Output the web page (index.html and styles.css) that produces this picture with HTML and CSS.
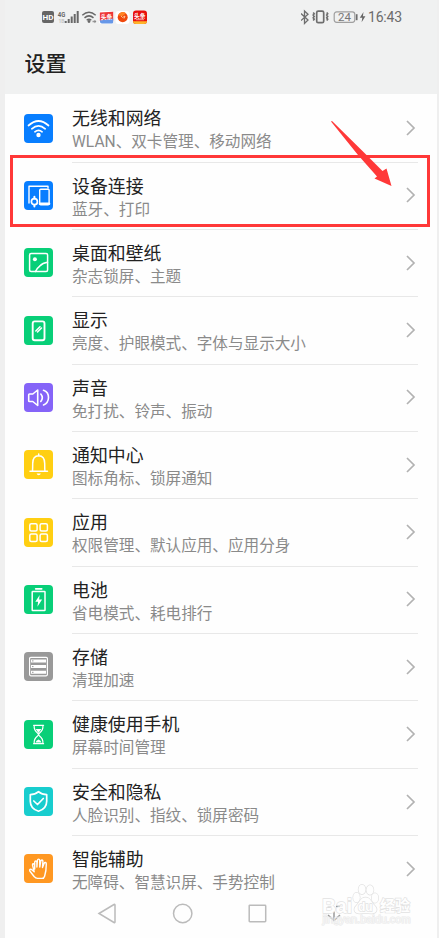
FILE: index.html
```html
<!DOCTYPE html>
<html lang="zh-CN">
<head>
<meta charset="utf-8">
<title>设置</title>
<link rel="stylesheet" href="styles.css">
</head>
<body>
<div class="phone">
  <header class="header">
    <div class="status">
      <svg class="status-left" width="108" height="18" viewBox="0 0 108 18">
        <rect x="1" y="3" width="12" height="12" rx="2" fill="#666"/>
        <text class="hd" x="1.500" y="12" textLength="11" lengthAdjust="spacingAndGlyphs">HD</text>
        <text class="net" x="16.800" y="8.700" textLength="7.500" lengthAdjust="spacingAndGlyphs">4G</text>
        <text class="net faint" x="17.500" y="15">1B</text>
        <path d="M24.700 15v-2M27.700 15v-4M30.700 15v-6.500M33.700 15V6M36.700 15V3" stroke="#686868" stroke-width="2"/>
        <path d="M41.300 7.200q6.700-6 13.400 0M43.500 9.900q4.500-4 9 0M45.700 12.300q2.300-2 4.600 0" fill="none" stroke="#686868" stroke-width="1.500"/>
        <circle cx="48" cy="13.500" r="1.400" fill="#686868"/><path d="M51.500 13.500h3" stroke="#999" stroke-width="1.500"/><path d="M53.500 11.800l1.900 1.700-1.900 1.700z" fill="#888"/>
        <rect x="58" y="3" width="14.500" height="13" rx="2.500" fill="#fff"/>
        <path d="M58.800 4.500l13.400-.7v9H58.800z" fill="#ee3737"/><path d="M58.800 12.500l13.400-2V14q0 1.500-1.500 1.500H61q-2.200 0-2.200-3z" fill="#6697e8"/>
        <text class="news" x="59.800" y="10.700">头条</text>
        <rect x="74.500" y="3" width="14" height="13" rx="3" fill="#fff"/><circle cx="81.700" cy="9.300" r="5" fill="#f0480c"/><path d="M77 7.500a5 5 0 0 1 8-2.200L81.500 8z" fill="#ff8424"/><path d="M80 8l1.500 1.500L84 8l-1 2.500" fill="none" stroke="#ffd0a0" stroke-width=".9"/>
        <rect x="92" y="2.500" width="14" height="13.500" rx="3" fill="#e80f0c"/><path d="M92 13.300h14q0 2.700-3 2.700h-8q-3 0-3-2.700z" fill="#ffb52a"/>
        <text class="news" x="93" y="9.800">头条</text><path d="M95 11.700h8" stroke="#fff" stroke-width=".6"/>
      </svg>
      <div class="status-right">
        <svg width="66" height="18" viewBox="0 0 66 18" fill="none" stroke="#6e6e6e">
          <path d="M0 5.500l7 6.500-3.500 3.500V3L7 6.200l-7 6.300" stroke-width="1.300"/>
          <rect x="15.700" y="3.200" width="7" height="11.500" rx="1.500" stroke-width="1.700"/>
          <path d="M12.200 4.500l1 1.300-1 1.300 1 1.300-1 1.400 1 1.400-1 1.300M25.700 4.500l1 1.300-1 1.300 1 1.300-1 1.400 1 1.400-1 1.300" stroke-width="1.600"/>
          <rect x="33.200" y="3.900" width="20.600" height="10.400" rx="2.500" stroke="#a0a0a0" stroke-width="1.200"/>
          <path d="M55.700 6.200v6" stroke-width="1.700"/>
          <path d="M62.500 4L58.800 9.800h2.500l-.7 4.500 3.800-6h-2.500z" fill="#666" stroke="none"/>
          <text class="charge" x="37" y="13">24</text>
        </svg>
        <span class="clock">16:43</span>
      </div>
    </div>
    <h1>设置</h1>
  </header>

  <main class="list">
    <section class="row">
      <svg class="icon blue" viewBox="0 0 29 29"><path d="M4.500 11.500q10-9 20 0M7.800 14.800q6.700-6 13.400 0M10.900 17.800q3.600-3 7.200 0" stroke-width="1.700"/><circle cx="14.500" cy="21" r="2.200" fill="#fff" stroke="none"/></svg>
      <div class="body"><div><h2>无线和网络</h2><p>WLAN、双卡管理、移动网络</p></div><svg class="chev" viewBox="0 0 10 16"><path d="M1 1l7 7-7 7"/></svg></div>
    </section>
    <section class="row">
      <svg class="icon blue" viewBox="0 0 29 29"><path d="M5 22V5.300h19V7" stroke-width="1.400"/><rect x="15.700" y="8.300" width="9.400" height="15.500" rx="1" stroke-width="1.400"/><path d="M16 22.700h9" stroke-width="2.600"/><circle cx="10.400" cy="20.700" r="3" stroke-width="1.700"/><path d="M10.400 15.800v1.600M10.400 24v1.500" stroke-width="2"/></svg>
      <div class="body"><div><h2>设备连接</h2><p>蓝牙、打印</p></div><svg class="chev" viewBox="0 0 10 16"><path d="M1 1l7 7-7 7"/></svg></div>
    </section>
    <section class="row">
      <svg class="icon green" viewBox="0 0 29 29"><rect x="5.600" y="5.600" width="18" height="18" rx="1.500"/><circle cx="10.900" cy="11.300" r="2" fill="#fff" stroke="none"/><path d="M11.500 23.500q1-3 4-5.200 3.300-3.600 8-4"/></svg>
      <div class="body"><div><h2>桌面和壁纸</h2><p>杂志锁屏、主题</p></div><svg class="chev" viewBox="0 0 10 16"><path d="M1 1l7 7-7 7"/></svg></div>
    </section>
    <section class="row">
      <svg class="icon green" viewBox="0 0 29 29"><rect x="8.700" y="5.400" width="11.800" height="18.800" rx="2" stroke-width="1.900"/><path d="M11.800 15l4.200-4.200M13.500 16l4-4" stroke-width="1.500"/></svg>
      <div class="body"><div><h2>显示</h2><p>亮度、护眼模式、字体与显示大小</p></div><svg class="chev" viewBox="0 0 10 16"><path d="M1 1l7 7-7 7"/></svg></div>
    </section>
    <section class="row">
      <svg class="icon purple" viewBox="0 0 29 29"><path d="M4.700 11.800q0-.8.800-.8h3.300l4.900-4v15.500l-4.900-4H5.500q-.8 0-.8-.8zM16.800 11q3 3.700 0 7.500M19.500 7.200Q24.700 9 24.500 14.700 24.300 20 19.500 22" stroke-width="1.600"/></svg>
      <div class="body"><div><h2>声音</h2><p>免打扰、铃声、振动</p></div><svg class="chev" viewBox="0 0 10 16"><path d="M1 1l7 7-7 7"/></svg></div>
    </section>
    <section class="row">
      <svg class="icon yellow" viewBox="0 0 29 29"><path d="M6 21.300h17.500M8.500 21q.2-2 .2-7.500 0-7.500 6-7.700 6 .2 6 7.700 0 5.500.2 7.500M14.700 5.500V4"/><path d="M12.600 23.500h4.200q-.5 1.700-2.100 1.700t-2.100-1.700z" fill="#fff" stroke="none"/></svg>
      <div class="body"><div><h2>通知中心</h2><p>图标角标、锁屏通知</p></div><svg class="chev" viewBox="0 0 10 16"><path d="M1 1l7 7-7 7"/></svg></div>
    </section>
    <section class="row">
      <svg class="icon yellow" viewBox="0 0 29 29"><rect x="5.800" y="5.800" width="7.300" height="7.300" rx="1.500"/><rect x="16.100" y="5.800" width="7.300" height="7.300" rx="1.500"/><rect x="5.800" y="16.100" width="7.300" height="7.300" rx="1.500"/><rect x="16.100" y="16.100" width="7.300" height="7.300" rx="1.500"/></svg>
      <div class="body"><div><h2>应用</h2><p>权限管理、默认应用、应用分身</p></div><svg class="chev" viewBox="0 0 10 16"><path d="M1 1l7 7-7 7"/></svg></div>
    </section>
    <section class="row">
      <svg class="icon green" viewBox="0 0 29 29"><rect x="8.200" y="6.600" width="12.800" height="19" rx=".5" stroke-width="1.500"/><path d="M11.700 3.800h6" stroke-width="1.700"/><path d="M15.700 10l-4.400 6.800h2.800l-.7 5 4.700-7.300h-3z" fill="#fff" stroke="none"/></svg>
      <div class="body"><div><h2>电池</h2><p>省电模式、耗电排行</p></div><svg class="chev" viewBox="0 0 10 16"><path d="M1 1l7 7-7 7"/></svg></div>
    </section>
    <section class="row">
      <svg class="icon gray" viewBox="0 0 29 29"><rect x="5.600" y="5.300" width="17.800" height="18.500" rx="1.200" stroke-width="1.200"/><path d="M7 8.900h15M7 14.600h15M7 20.300h15" stroke-width="3"/><path d="M8 8.900h1.500M8 14.600h1.500M8 20.300h1.500" stroke="#999" stroke-width="1"/></svg>
      <div class="body"><div><h2>存储</h2><p>清理加速</p></div><svg class="chev" viewBox="0 0 10 16"><path d="M1 1l7 7-7 7"/></svg></div>
    </section>
    <section class="row">
      <svg class="icon green" viewBox="0 0 29 29"><path d="M9.600 5.300h10M9.600 23.700h10M10.200 5.500q-.5 4.500 3.300 7.500 1 1 1 1.500t-1 1.500q-3.800 3-3.300 7.500M18.900 5.500q.5 4.500-3.300 7.500-1 1-1 1.500t1 1.500q3.800 3 3.300 7.500" stroke-width="1.200"/><path d="M11.700 9h5.600l-2.800 4zM11.500 22.500q.5-2 3-3 2.500 1 3 3z" fill="#fff" stroke="none"/></svg>
      <div class="body"><div><h2>健康使用手机</h2><p>屏幕时间管理</p></div><svg class="chev" viewBox="0 0 10 16"><path d="M1 1l7 7-7 7"/></svg></div>
    </section>
    <section class="row">
      <svg class="icon cyan" viewBox="0 0 29 29"><path d="M14.500 4.700q3.500 3 8.200 3v6.500q0 7.500-8.200 10-8.200-2.500-8.200-10V7.700q4.700 0 8.200-3zM9.800 14l3.700 3.500 5.800-6" stroke-width="1.700"/></svg>
      <div class="body"><div><h2>安全和隐私</h2><p>人脸识别、指纹、锁屏密码</p></div><svg class="chev" viewBox="0 0 10 16"><path d="M1 1l7 7-7 7"/></svg></div>
    </section>
    <section class="row last">
      <svg class="icon orange" viewBox="0 0 29 29"><path d="M10.700 15V8.200q0-1.200 1-1.200t1.200 1.200V13M12.900 13l.5-6.700q.2-1.200 1.200-1.200t1.100 1.200L15.800 13M15.800 13l1-6q.3-1.200 1.300-1 .9.200.8 1.300L18.500 13.500M18.500 13.500l1.700-4.300q.4-1 1.300-.7t.8 1.400q0 7-1.700 12.300-.6 2.200-2.600 2.200h-4.500q-2 0-3.200-1.700l-4.500-5.700q-.6-1 .3-1.600.8-.5 1.800.3l2.300 2.100-1.700-6.800q-.1-1.200.7-1.300.9-.1 1.300 1.200" stroke-width="1.400"/></svg>
      <div class="body"><div><h2>智能辅助</h2><p>无障碍、智慧识屏、手势控制</p></div><svg class="chev" viewBox="0 0 10 16"><path d="M1 1l7 7-7 7"/></svg></div>
    </section>
  </main>

  <nav class="navbar">
    <svg viewBox="0 0 22 22"><path d="M3 11.500L18 2.500q1-.5 1 .5v17q0 1-1 .5z"/></svg>
    <svg viewBox="0 0 22 22"><circle cx="10.700" cy="11.500" r="9.200"/></svg>
    <svg viewBox="0 0 22 22"><rect x="2.200" y="3.200" width="16.500" height="16.500" rx=".7"/></svg>
    <svg viewBox="0 0 22 22"><path class="dark" d="M4.500 4.500h4M13 4.500h4M11 9.500v8.500M5 13l6 5.500L17 13"/></svg>
  </nav>
</div>

<div class="highlight"></div>
<svg class="arrow" viewBox="0 0 62 67"><path d="M1 1.500L2 1l32 31.500 18.500 18.500 4-2.500 5 17.500-17-7.500 2.500-2L28 35z"/></svg>
<svg class="watermark" viewBox="0 0 94 46">
  <text class="wm-big" x="2" y="31" textLength="30" lengthAdjust="spacingAndGlyphs">Bai</text>
  <g class="paw"><ellipse cx="36.500" cy="15.500" rx="3.300" ry="4.700"/><ellipse cx="42" cy="7.500" rx="3.500" ry="4.700"/><ellipse cx="50" cy="8" rx="3.500" ry="4.700"/><ellipse cx="55" cy="16" rx="3.300" ry="4.700"/><path d="M45.500 15.500c5 0 6 5 9 8 4 4 2 8-3 8q-6-1-12 0c-5 0-7-4-3-8 3-3 4-8 9-8z"/></g>
  <text class="wm-du" x="38" y="29">du</text>
  <text class="wm-cn" x="60" y="29">经验</text>
  <text class="wm-url" x="2.500" y="41" textLength="88" lengthAdjust="spacingAndGlyphs">jingyan.baidu.com</text>
</svg>
</body>
</html>
```

FILE: styles.css
```css
* { box-sizing: border-box; }
body {
  position: relative;
  margin: 0;
  height: 938px;
  overflow: hidden;
  background: #efefef;
  font-family: Roboto, "Noto Sans CJK SC", sans-serif;
}
.phone {
  width: 432px;
  height: 938px;
  margin-left: 5px;
  background: #fefefe;
  display: flex;
  flex-direction: column;
}
.header {
  height: 94px;
  flex: none;
  background: #f0f1f1;
}
.status {
  display: flex;
  justify-content: space-between;
  height: 34px;
  padding: 8px 34px 0 36px;
}
.status-right { display: flex; }
.clock {
  width: 35px;
  margin-left: 1px;
  font-size: 14px;
  line-height: 19px;
  letter-spacing: -0.2px;
  color: #6c6c6c;
  white-space: nowrap;
}
svg text { stroke: none; }
.hd { font: bold 8px Roboto, sans-serif; fill: #fff; }
.net { font: bold 8px Roboto, sans-serif; fill: #666; }
.faint { font-size: 5px; fill: #c4c4c4; }
.news { font: bold 5.800px "Noto Sans CJK SC", sans-serif; fill: #fff; }
.charge { font: 11.500px Roboto, sans-serif; fill: #777; }
h1 {
  margin: 14px 0 0 19.500px;
  font-size: 21px;
  line-height: 33px;
  font-weight: 500;
  color: #222;
}
.list { flex: none; padding-top: 1.200px; }
.row {
  display: flex;
  height: 67.350px;
  padding: 0 19px;
}
.icon {
  width: 29px;
  height: 29px;
  margin: 18.500px 19px 0 0;
  flex: none;
  border-radius: 4px;
  fill: none;
  stroke: #fff;
  stroke-width: 1.500;
  stroke-linecap: round;
  stroke-linejoin: round;
}
.blue { background: #087eff; }
.green { background: #08cf78; }
.purple { background: #8564f8; }
.yellow { background: #ffcf12; }
.gray { background: #999; stroke-linecap: butt; }
.cyan { background: #18cdce; }
.orange { background: #ff9822; }
.body {
  flex: 1;
  display: flex;
  justify-content: space-between;
  padding-top: 11px;
  border-bottom: 1px solid #e8e8e8;
}
.last .body { border-bottom: 0; }
h2, p { margin: 0; font-weight: 400; white-space: nowrap; }
h2 { font-size: 17.900px; line-height: 25px; color: #222; }
p { font-size: 15.600px; line-height: 22px; color: #8a8a8a; }
.chev {
  width: 10px;
  height: 16px;
  margin: 13.900px 2px 0 0;
  fill: none;
  stroke: #b2b2b2;
  stroke-width: 1.700;
}
.navbar {
  display: flex;
  gap: 53.500px;
  margin: -1px 0 0 91px;
}
.navbar svg {
  width: 22px;
  height: 22px;
  fill: none;
  stroke: #bbb;
  stroke-width: 1.500;
}
.navbar .dark { stroke: #999; }
.highlight {
  position: absolute;
  left: 10px;
  top: 155px;
  width: 420px;
  height: 72px;
  border: 3px solid #ff3838;
}
.arrow {
  position: absolute;
  left: 330px;
  top: 120px;
  width: 62px;
  height: 67px;
  fill: #ff3838;
}
.watermark {
  position: absolute;
  left: 320px;
  top: 882px;
  width: 94px;
  height: 46px;
  opacity: .75;
}
.watermark text, .paw {
  fill: #fff;
  stroke: #d9d9d9;
  stroke-width: 1.400;
  paint-order: stroke;
}
.wm-big { font: bold 20px "Liberation Sans", sans-serif; }
.wm-du { font: bold 12px "Liberation Sans", sans-serif; }
.wm-cn { font: bold 15px "Noto Sans CJK SC", sans-serif; }
.watermark .wm-url { font: 10px "Liberation Sans", sans-serif; fill: #f4f4f4; stroke: #e2e2e2; stroke-width: 1; }
```
